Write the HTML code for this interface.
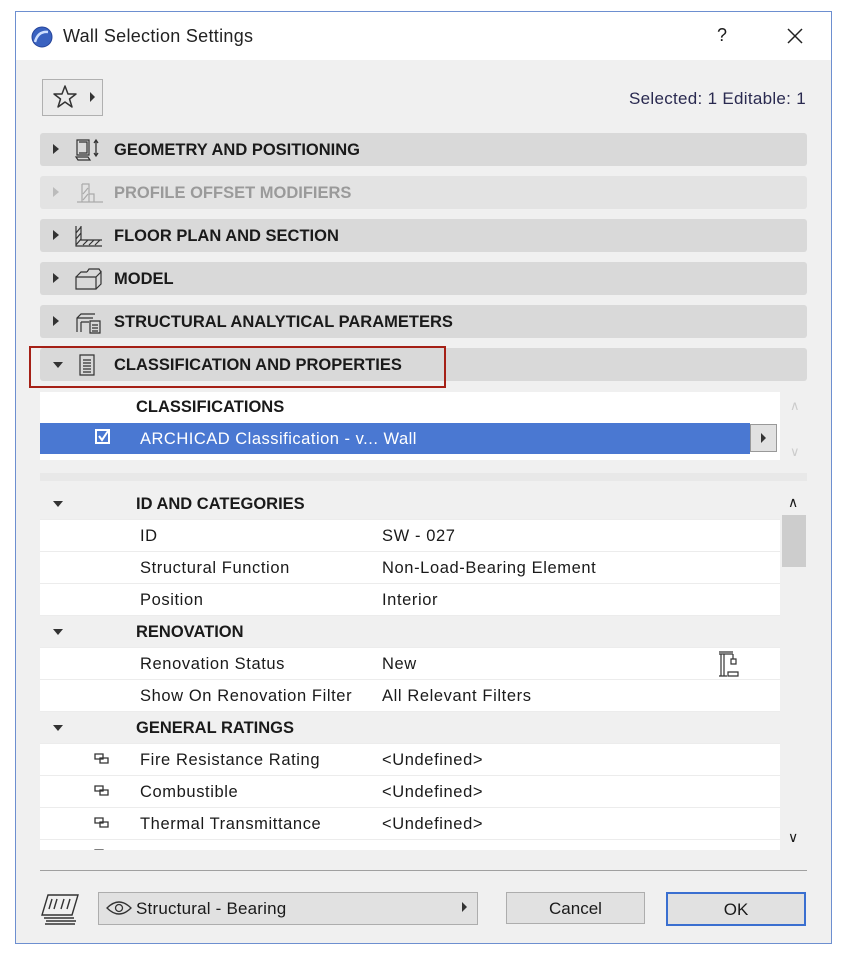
<!DOCTYPE html>
<html><head><meta charset="utf-8"><style>
body{margin:0;width:865px;height:967px;background:#fff;position:relative;overflow:hidden;font-family:"Liberation Sans",sans-serif;color:#1a1a1a}
.a{position:absolute}
.win{left:15px;top:11px;width:815px;height:931px;border:1px solid #6d8fd0;background:#f0f0f0}
.tb{left:16px;top:12px;width:815px;height:48px;background:#fff}
.bar{position:absolute;left:40px;width:767px;height:33px;background:#d9d9d9;border-radius:3px}
.bar .t{position:absolute;left:74px;top:8px;font-weight:bold;font-size:16.5px;letter-spacing:0}
.bar .tri{position:absolute;left:13px;top:11px;width:0;height:0;border-top:5px solid transparent;border-bottom:5px solid transparent;border-left:6px solid #333}
.row{position:absolute;left:40px;width:740px;height:31px;background:#fff;border-bottom:1px solid #ececec;font-size:16.5px;letter-spacing:0.6px}
.row span{position:absolute;top:7px}
.hdr{background:#f0f0f0;font-weight:bold;letter-spacing:0}
.dn{position:absolute;left:13px;top:13px;border-left:5px solid transparent;border-right:5px solid transparent;border-top:6px solid #333}
.btn{position:absolute;height:30px;background:#e1e1e1;border:1px solid #adadad;font-size:17px;text-align:center;line-height:32px}
</style></head><body>
<div class="a win"></div>
<div class="a tb"></div>
<svg class="a" style="left:30px;top:25px" width="24" height="24" viewBox="0 0 24 24"><circle cx="12" cy="12" r="10" fill="#3a62c0"/><path d="M5 17 Q8 6 18 7" stroke="#cfe0ff" stroke-width="2.5" fill="none"/><circle cx="12" cy="12" r="10" fill="none" stroke="#26449a" stroke-width="1"/></svg>
<div class="a" style="left:63px;top:26px;font-size:18px;letter-spacing:0.3px;color:#222">Wall Selection Settings</div>
<div class="a" style="left:717px;top:25px;font-size:18px">?</div>
<svg class="a" style="left:786px;top:27px" width="18" height="18"><path d="M2 2L16 16M16 2L2 16" stroke="#222" stroke-width="1.5"/></svg>

<div class="a" style="left:42px;top:79px;width:59px;height:35px;border:1px solid #b0b0b0;background:#ebebeb"></div>
<svg class="a" style="left:52px;top:84px" width="26" height="26" viewBox="0 0 26 26"><path d="M13 2L16 10L24 10L17.5 15L20 23L13 18L6 23L8.5 15L2 10L10 10Z" fill="none" stroke="#333" stroke-width="1.5" stroke-linejoin="round"/></svg>
<div class="a" style="left:90px;top:92px;border-top:5px solid transparent;border-bottom:5px solid transparent;border-left:5px solid #333"></div>
<div class="a" style="right:59px;top:89px;font-size:17px;letter-spacing:0.3px;color:#2a2a50">Selected: 1 Editable: 1</div>

<div class="bar" style="top:133px"><div class="tri"></div>
<svg class="a" style="left:34px;top:5px" width="30" height="24"><path d="M3 2h12v15H3zM5 4h8v11H5M2 19h12l2 3H4z" fill="none" stroke="#333" stroke-width="1.2"/><path d="M22 3v14M20 5l2-3 2 3M20 15l2 3 2-3" fill="none" stroke="#333" stroke-width="1.3"/></svg>
<div class="t">GEOMETRY AND POSITIONING</div></div>
<div class="bar" style="top:176px;background:#e3e3e3"><div class="tri" style="border-left-color:#bbb"></div>
<svg class="a" style="left:34px;top:5px" width="30" height="24"><path d="M8 3h7v18M8 3v18M15 13h5v8M3 21h26M9 19l5-6M9 13l5-6" fill="none" stroke="#aaa" stroke-width="1.2"/></svg>
<div class="t" style="color:#9a9a9a">PROFILE OFFSET MODIFIERS</div></div>
<div class="bar" style="top:219px"><div class="tri"></div>
<svg class="a" style="left:34px;top:5px" width="30" height="24"><path d="M2 2v20h26M7 2v14h21M2 21l5-6M2 15l5-6M2 9l5-6M9 21l5-5M15 21l5-5M21 21l5-5" fill="none" stroke="#333" stroke-width="1.2"/></svg>
<div class="t">FLOOR PLAN AND SECTION</div></div>
<div class="bar" style="top:262px"><div class="tri"></div>
<svg class="a" style="left:34px;top:5px" width="30" height="24"><path d="M2 10h20v12H2zM22 10l5-5v12l-5 5M2 10l5-5h6M13 5l2-3h10l2 3" fill="none" stroke="#333" stroke-width="1.2"/></svg>
<div class="t">MODEL</div></div>
<div class="bar" style="top:305px"><div class="tri"></div>
<svg class="a" style="left:34px;top:5px" width="30" height="24"><path d="M3 22V8l4-4h14M3 8h16M7 12h8M7 12v10M16 11h10v12H16zM18 15h6M18 18h6M18 21h6" fill="none" stroke="#333" stroke-width="1.2"/></svg>
<div class="t">STRUCTURAL ANALYTICAL PARAMETERS</div></div>
<div class="bar" style="top:348px"><div class="dn" style="top:14px"></div>
<svg class="a" style="left:36px;top:5px" width="24" height="24"><path d="M4 2h14v20H4zM7 7h8M7 10h8M7 13h8M7 16h8M7 19h8" fill="none" stroke="#333" stroke-width="1.2"/></svg>
<div class="t">CLASSIFICATION AND PROPERTIES</div></div>
<div class="a" style="left:29px;top:346px;width:413px;height:38px;border:2px solid #a52016"></div>

<div class="a" style="left:40px;top:392px;width:740px;height:68px;background:#fff"></div>
<div class="a" style="left:136px;top:398px;font-size:16.5px;font-weight:bold">CLASSIFICATIONS</div>
<div class="a" style="left:40px;top:423px;width:710px;height:31px;background:#4a78d2"></div>
<div class="a" style="left:95px;top:429px;width:15px;height:15px;border:2px solid #fff;box-sizing:border-box"></div>
<svg class="a" style="left:96px;top:429px" width="14" height="14"><path d="M3 7l3 4 6-9" stroke="#fff" stroke-width="2" fill="none"/></svg>
<div class="a" style="left:140px;top:430px;font-size:16.5px;letter-spacing:0.5px;color:#fff">ARCHICAD Classification - v... Wall</div>
<div class="a" style="left:750px;top:424px;width:27px;height:28px;background:#e1e1e1;border:1px solid #999;box-sizing:border-box"></div>
<div class="a" style="left:761px;top:433px;border-top:5px solid transparent;border-bottom:5px solid transparent;border-left:5px solid #333"></div>
<div class="a" style="left:790px;top:398px;color:#ccc;font-size:13px">&#8743;</div>
<div class="a" style="left:790px;top:444px;color:#ccc;font-size:13px">&#8744;</div>
<div class="a" style="left:40px;top:473px;width:767px;height:8px;background:#e8e8e8"></div>

<div class="a" style="left:782px;top:488px;width:25px;height:362px;background:#f0f0f0"></div>
<div class="a" style="left:782px;top:515px;width:24px;height:52px;background:#cdcdcd"></div>
<div class="a" style="left:788px;top:494px;font-size:14px">&#8743;</div>
<div class="a" style="left:788px;top:829px;font-size:14px">&#8744;</div>

<div class="row hdr" style="top:488px"><div class="dn"></div><span style="left:96px">ID AND CATEGORIES</span></div>
<div class="row" style="top:520px"><span style="left:100px">ID</span><span style="left:342px">SW - 027</span></div>
<div class="row" style="top:552px"><span style="left:100px">Structural Function</span><span style="left:342px">Non-Load-Bearing Element</span></div>
<div class="row" style="top:584px"><span style="left:100px">Position</span><span style="left:342px">Interior</span></div>
<div class="row hdr" style="top:616px"><div class="dn"></div><span style="left:96px">RENOVATION</span></div>
<div class="row" style="top:648px"><span style="left:100px">Renovation Status</span><span style="left:342px">New</span>
<svg class="a" style="left:676px;top:2px" width="30" height="28"><path d="M3 2h14M3 4h14M5 4v22M8 4v22M3 26h8M17 4v5M15 9h5v5h-5zM12 22h10v4H12z" fill="none" stroke="#333" stroke-width="1.2"/></svg></div>
<div class="row" style="top:680px"><span style="left:100px">Show On Renovation Filter</span><span style="left:342px">All Relevant Filters</span></div>
<div class="row hdr" style="top:712px"><div class="dn"></div><span style="left:96px">GENERAL RATINGS</span></div>
<div class="row" style="top:744px"><svg class="a" style="left:54px;top:9px" width="16" height="12"><path d="M1 1h8v5H1zM6 5h8v5H6z" fill="none" stroke="#333" stroke-width="1.3"/></svg><span style="left:100px">Fire Resistance Rating</span><span style="left:342px">&lt;Undefined&gt;</span></div>
<div class="row" style="top:776px"><svg class="a" style="left:54px;top:9px" width="16" height="12"><path d="M1 1h8v5H1zM6 5h8v5H6z" fill="none" stroke="#333" stroke-width="1.3"/></svg><span style="left:100px">Combustible</span><span style="left:342px">&lt;Undefined&gt;</span></div>
<div class="row" style="top:808px"><svg class="a" style="left:54px;top:9px" width="16" height="12"><path d="M1 1h8v5H1zM6 5h8v5H6z" fill="none" stroke="#333" stroke-width="1.3"/></svg><span style="left:100px">Thermal Transmittance</span><span style="left:342px">&lt;Undefined&gt;</span></div>
<div class="row" style="top:840px;height:10px;border:0;overflow:hidden"><svg class="a" style="left:54px;top:9px" width="16" height="12"><path d="M1 1h8v5H1z" fill="none" stroke="#333" stroke-width="1.3"/></svg></div>

<div class="a" style="left:40px;top:870px;width:767px;height:1px;background:#a0a0a0"></div>
<svg class="a" style="left:40px;top:893px" width="42" height="34"><path d="M8 2h30l-6 20H2zM6 28h30M4 25h30M5 31h30M12 6l-3 10M17 6l-3 10M24 6l-3 10M30 6l-3 10" fill="none" stroke="#333" stroke-width="1.4"/></svg>
<div class="a" style="left:98px;top:892px;width:378px;height:31px;background:#e1e1e1;border:1px solid #adadad"></div>
<svg class="a" style="left:106px;top:900px" width="26" height="16"><path d="M1 8Q13 -4 25 8Q13 20 1 8Z" fill="none" stroke="#333" stroke-width="1.3"/><circle cx="13" cy="8" r="3.5" fill="none" stroke="#333" stroke-width="1.3"/></svg>
<div class="a" style="left:136px;top:899px;font-size:17px;letter-spacing:0.2px">Structural - Bearing</div>
<div class="a" style="left:462px;top:902px;border-top:5px solid transparent;border-bottom:5px solid transparent;border-left:5px solid #333"></div>
<div class="btn" style="left:506px;top:892px;width:137px">Cancel</div>
<div class="btn" style="left:666px;top:892px;width:136px;border:2px solid #3a6fd0;line-height:31px">OK</div>
</body></html>
